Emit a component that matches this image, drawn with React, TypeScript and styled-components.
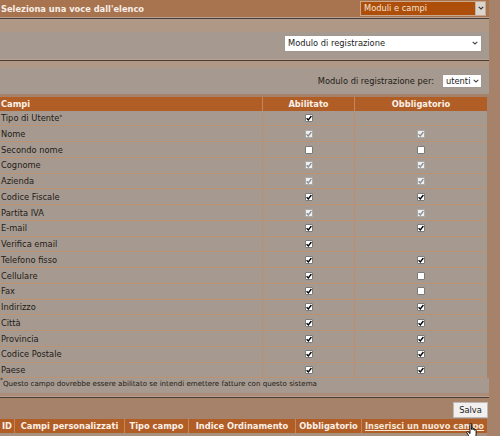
import React from 'react'
import styled, { createGlobalStyle } from 'styled-components'

type Box = 'on' | 'dis' | 'off' | null

const rows: [string, Box, Box, boolean?][] = [
  ['Tipo di Utente', 'on', null, true],
  ['Nome', 'dis', 'dis'],
  ['Secondo nome', 'off', 'off'],
  ['Cognome', 'dis', 'dis'],
  ['Azienda', 'dis', 'dis'],
  ['Codice Fiscale', 'on', 'on'],
  ['Partita IVA', 'dis', 'dis'],
  ['E-mail', 'on', 'on'],
  ['Verifica email', 'on', null],
  ['Telefono fisso', 'on', 'on'],
  ['Cellulare', 'on', 'off'],
  ['Fax', 'on', 'off'],
  ['Indirizzo', 'on', 'on'],
  ['Città', 'on', 'on'],
  ['Provincia', 'on', 'on'],
  ['Codice Postale', 'on', 'on'],
  ['Paese', 'on', 'on'],
]

const GlobalStyle = createGlobalStyle`
  html, body { margin: 0; padding: 0; background: #a7826b; }
  body {
    font-family: "DejaVu Sans", Verdana, sans-serif;
    font-size: 8.3px;
    color: #1f1a17;
  }
`

const Page = styled.div`
  width: 489px;
  position: relative;
`

const TopBar = styled.div`
  height: 17px;
  background: #a8744f;
  display: flex;
  align-items: center;
  justify-content: space-between;
  padding: 0 3px 0 1px;
`

const Title = styled.span`
  font-weight: bold;
  color: #f7efe7;
`

const Select = styled.div<{ $dark?: boolean; $w: number; $h: number }>`
  width: ${p => p.$w}px;
  height: ${p => p.$h}px;
  box-sizing: border-box;
  display: flex;
  align-items: center;
  background: ${p => (p.$dark ? '#ad4f0b' : '#ffffff')};
  color: ${p => (p.$dark ? '#f3e2d2' : '#1c1c1c')};
  border: 1px solid ${p => (p.$dark ? '#caa88e' : '#a09890')};
  padding-left: 3px;
`

const SelectText = styled.span`
  flex: 1;
  white-space: nowrap;
`

const Arrow = styled.span<{ $dark?: boolean }>`
  width: ${p => (p.$dark ? 9 : 12)}px;
  align-self: stretch;
  display: flex;
  align-items: center;
  justify-content: center;
  background: ${p => (p.$dark ? '#dcd5ce' : 'transparent')};
  border-left: ${p => (p.$dark ? '1px solid #bdb3aa' : 'none')};
`

const Rule = styled.div`
  height: 1px;
  background: #4d3e35;
  border-top: 1px solid #b7a091;
`

const Band = styled.div<{ $h: number }>`
  height: ${p => p.$h}px;
  background: #b09887;
`

const Panel = styled.div<{ $h: number; $top?: boolean }>`
  height: ${p => p.$h}px;
  box-sizing: border-box;
  background: #a69a90;
  display: flex;
  justify-content: flex-end;
  align-items: ${p => (p.$top ? 'flex-start' : 'center')};
  padding: ${p => (p.$top ? '3px' : '0')} 7px 0 0;
  gap: 8px;
`

const Grid = styled.div<{ $cols: string }>`
  display: grid;
  grid-template-columns: ${p => p.$cols};
  width: 487px;
`

const HeadCell = styled.div<{ $left?: boolean; $first?: boolean }>`
  height: 13.7px;
  background: #b05d26;
  color: #fbf1e8;
  font-weight: bold;
  display: flex;
  align-items: center;
  justify-content: ${p => (p.$left ? 'flex-start' : 'center')};
  padding-left: ${p => (p.$left ? '1px' : '0')};
  border-left: ${p => (p.$first ? 'none' : '1px solid #c48660')};
  white-space: nowrap;
`

const Cell = styled.div<{ $center?: boolean; $first?: boolean }>`
  height: 15.75px;
  box-sizing: border-box;
  background: #a69a90;
  border-bottom: 1px solid #bb9373;
  border-left: ${p => (p.$first ? 'none' : '1px solid #b98f70')};
  display: flex;
  align-items: center;
  justify-content: ${p => (p.$center ? 'center' : 'flex-start')};
  padding-left: ${p => (p.$center ? '0' : '1px')};
  white-space: nowrap;
`

const Sup = styled.sup`
  font-size: 6px;
  line-height: 0;
  position: relative;
  top: -1px;
`

const CheckBox = styled.span<{ $state: 'on' | 'dis' | 'off' }>`
  display: inline-flex;
  width: 8px;
  height: 8px;
  box-sizing: border-box;
  border: 1px solid ${p => (p.$state === 'dis' ? '#a9a9a9' : '#7a7a7a')};
  background: ${p => (p.$state === 'dis' ? '#efefef' : '#ffffff')};
  border-radius: 1px;
  align-items: center;
  justify-content: center;
`

const Footnote = styled.div`
  height: 14.55px;
  box-sizing: border-box;
  background: #a69a90;
  font-size: 7.1px;
  padding: 1px 0 0 0;
  white-space: nowrap;
`

const BottomBand = styled.div`
  height: 3px;
  background: #ab8d7a;
`

const ButtonRow = styled.div`
  display: flex;
  justify-content: flex-end;
  padding: 3.7px 1px 1.2px 0;
`

const Button = styled.div`
  width: 35px;
  height: 16.6px;
  box-sizing: border-box;
  background: #f1f0ef;
  border: 1px solid #bdb8b3;
  display: flex;
  align-items: center;
  justify-content: center;
  color: #1c1c1c;
`

const HeadLink = styled.span`
  text-decoration: underline;
  color: #f6e6d6;
`

const EmptyRow = styled.div`
  width: 487px;
  height: 6px;
  background: #a8907f;
`

const Cursor = styled.svg`
  position: absolute;
  left: 466px;
  top: 423px;
`

const Chevron = ({ dark }: { dark?: boolean }) => (
  <svg width="6" height="4" viewBox="0 0 6 4">
    <path d="M0.7 0.8 L3 3 L5.3 0.8" fill="none" stroke={dark ? '#333' : '#444'} strokeWidth="1.1" />
  </svg>
)

const Check = ({ state }: { state: Box }) => {
  if (!state) return null
  return (
    <CheckBox $state={state}>
      {state !== 'off' && (
        <svg width="6" height="6" viewBox="0 0 6 6">
          <path
            d="M0.6 3.2 L2.3 4.9 L5.4 1"
            fill="none"
            stroke={state === 'on' ? '#000' : '#8d8d8d'}
            strokeWidth="1.4"
          />
        </svg>
      )}
    </CheckBox>
  )
}

const App = (): JSX.Element => {
  return (
    <Page>
      <GlobalStyle />
      <TopBar>
        <Title>Seleziona una voce dall'elenco</Title>
        <Select $dark $w={126} $h={14.3}>
          <SelectText>Moduli e campi</SelectText>
          <Arrow $dark>
            <Chevron dark />
          </Arrow>
        </Select>
      </TopBar>
      <Rule />
      <Band $h={13} />
      <Panel $h={27} $top>
        <Select $w={198} $h={16.7}>
          <SelectText>Modulo di registrazione</SelectText>
          <Arrow>
            <Chevron />
          </Arrow>
        </Select>
      </Panel>
      <Rule />
      <Band $h={7} />
      <Panel $h={26}>
        <span>Modulo di registrazione per:</span>
        <Select $w={40} $h={14.5}>
          <SelectText>utenti</SelectText>
          <Arrow>
            <Chevron />
          </Arrow>
        </Select>
      </Panel>
      <div style={{ height: 3 }} />
      <Grid $cols="262px 92px 133px">
        <HeadCell $left $first>Campi</HeadCell>
        <HeadCell>Abilitato</HeadCell>
        <HeadCell>Obbligatorio</HeadCell>
        {rows.map(([name, a, o, star]) => (
          <React.Fragment key={name}>
            <Cell $first>
              {name}
              {star && <Sup>*</Sup>}
            </Cell>
            <Cell $center>
              <Check state={a} />
            </Cell>
            <Cell $center>
              <Check state={o} />
            </Cell>
          </React.Fragment>
        ))}
      </Grid>
      <Footnote>
        <Sup>*</Sup>Questo campo dovrebbe essere abilitato se intendi emettere fatture con questo sistema
      </Footnote>
      <BottomBand />
      <Rule />
      <ButtonRow>
        <Button>Salva</Button>
      </ButtonRow>
      <Grid $cols="14px 110px 64px 107px 66px 126px">
        <HeadCell $first>ID</HeadCell>
        <HeadCell>Campi personalizzati</HeadCell>
        <HeadCell>Tipo campo</HeadCell>
        <HeadCell>Indice Ordinamento</HeadCell>
        <HeadCell>Obbligatorio</HeadCell>
        <HeadCell>
          <HeadLink>Inserisci un nuovo campo</HeadLink>
        </HeadCell>
      </Grid>
      <EmptyRow />
      <Cursor width="13" height="16" viewBox="0 0 13 16">
        <path
          d="M4 1.2 C4 0.2 5.6 0.2 5.6 1.2 L5.6 6.5 L5.6 5.4 C5.6 4.6 7.1 4.6 7.1 5.4 L7.1 6.8 L7.1 6 C7.1 5.2 8.6 5.2 8.6 6 L8.6 7.3 C8.6 6.5 10.1 6.5 10.1 7.3 L10.1 11 C10.1 13 9 14.8 7.6 14.8 L5.2 14.8 C4.2 14.8 3.4 13.8 2.6 12.6 L0.9 9.8 C0.4 9 1.3 8.1 2.1 8.8 L4 10.6 Z"
          fill="#fff"
          stroke="#000"
          strokeWidth="0.9"
          strokeLinejoin="round"
        />
      </Cursor>
    </Page>
  )
}

export default App
